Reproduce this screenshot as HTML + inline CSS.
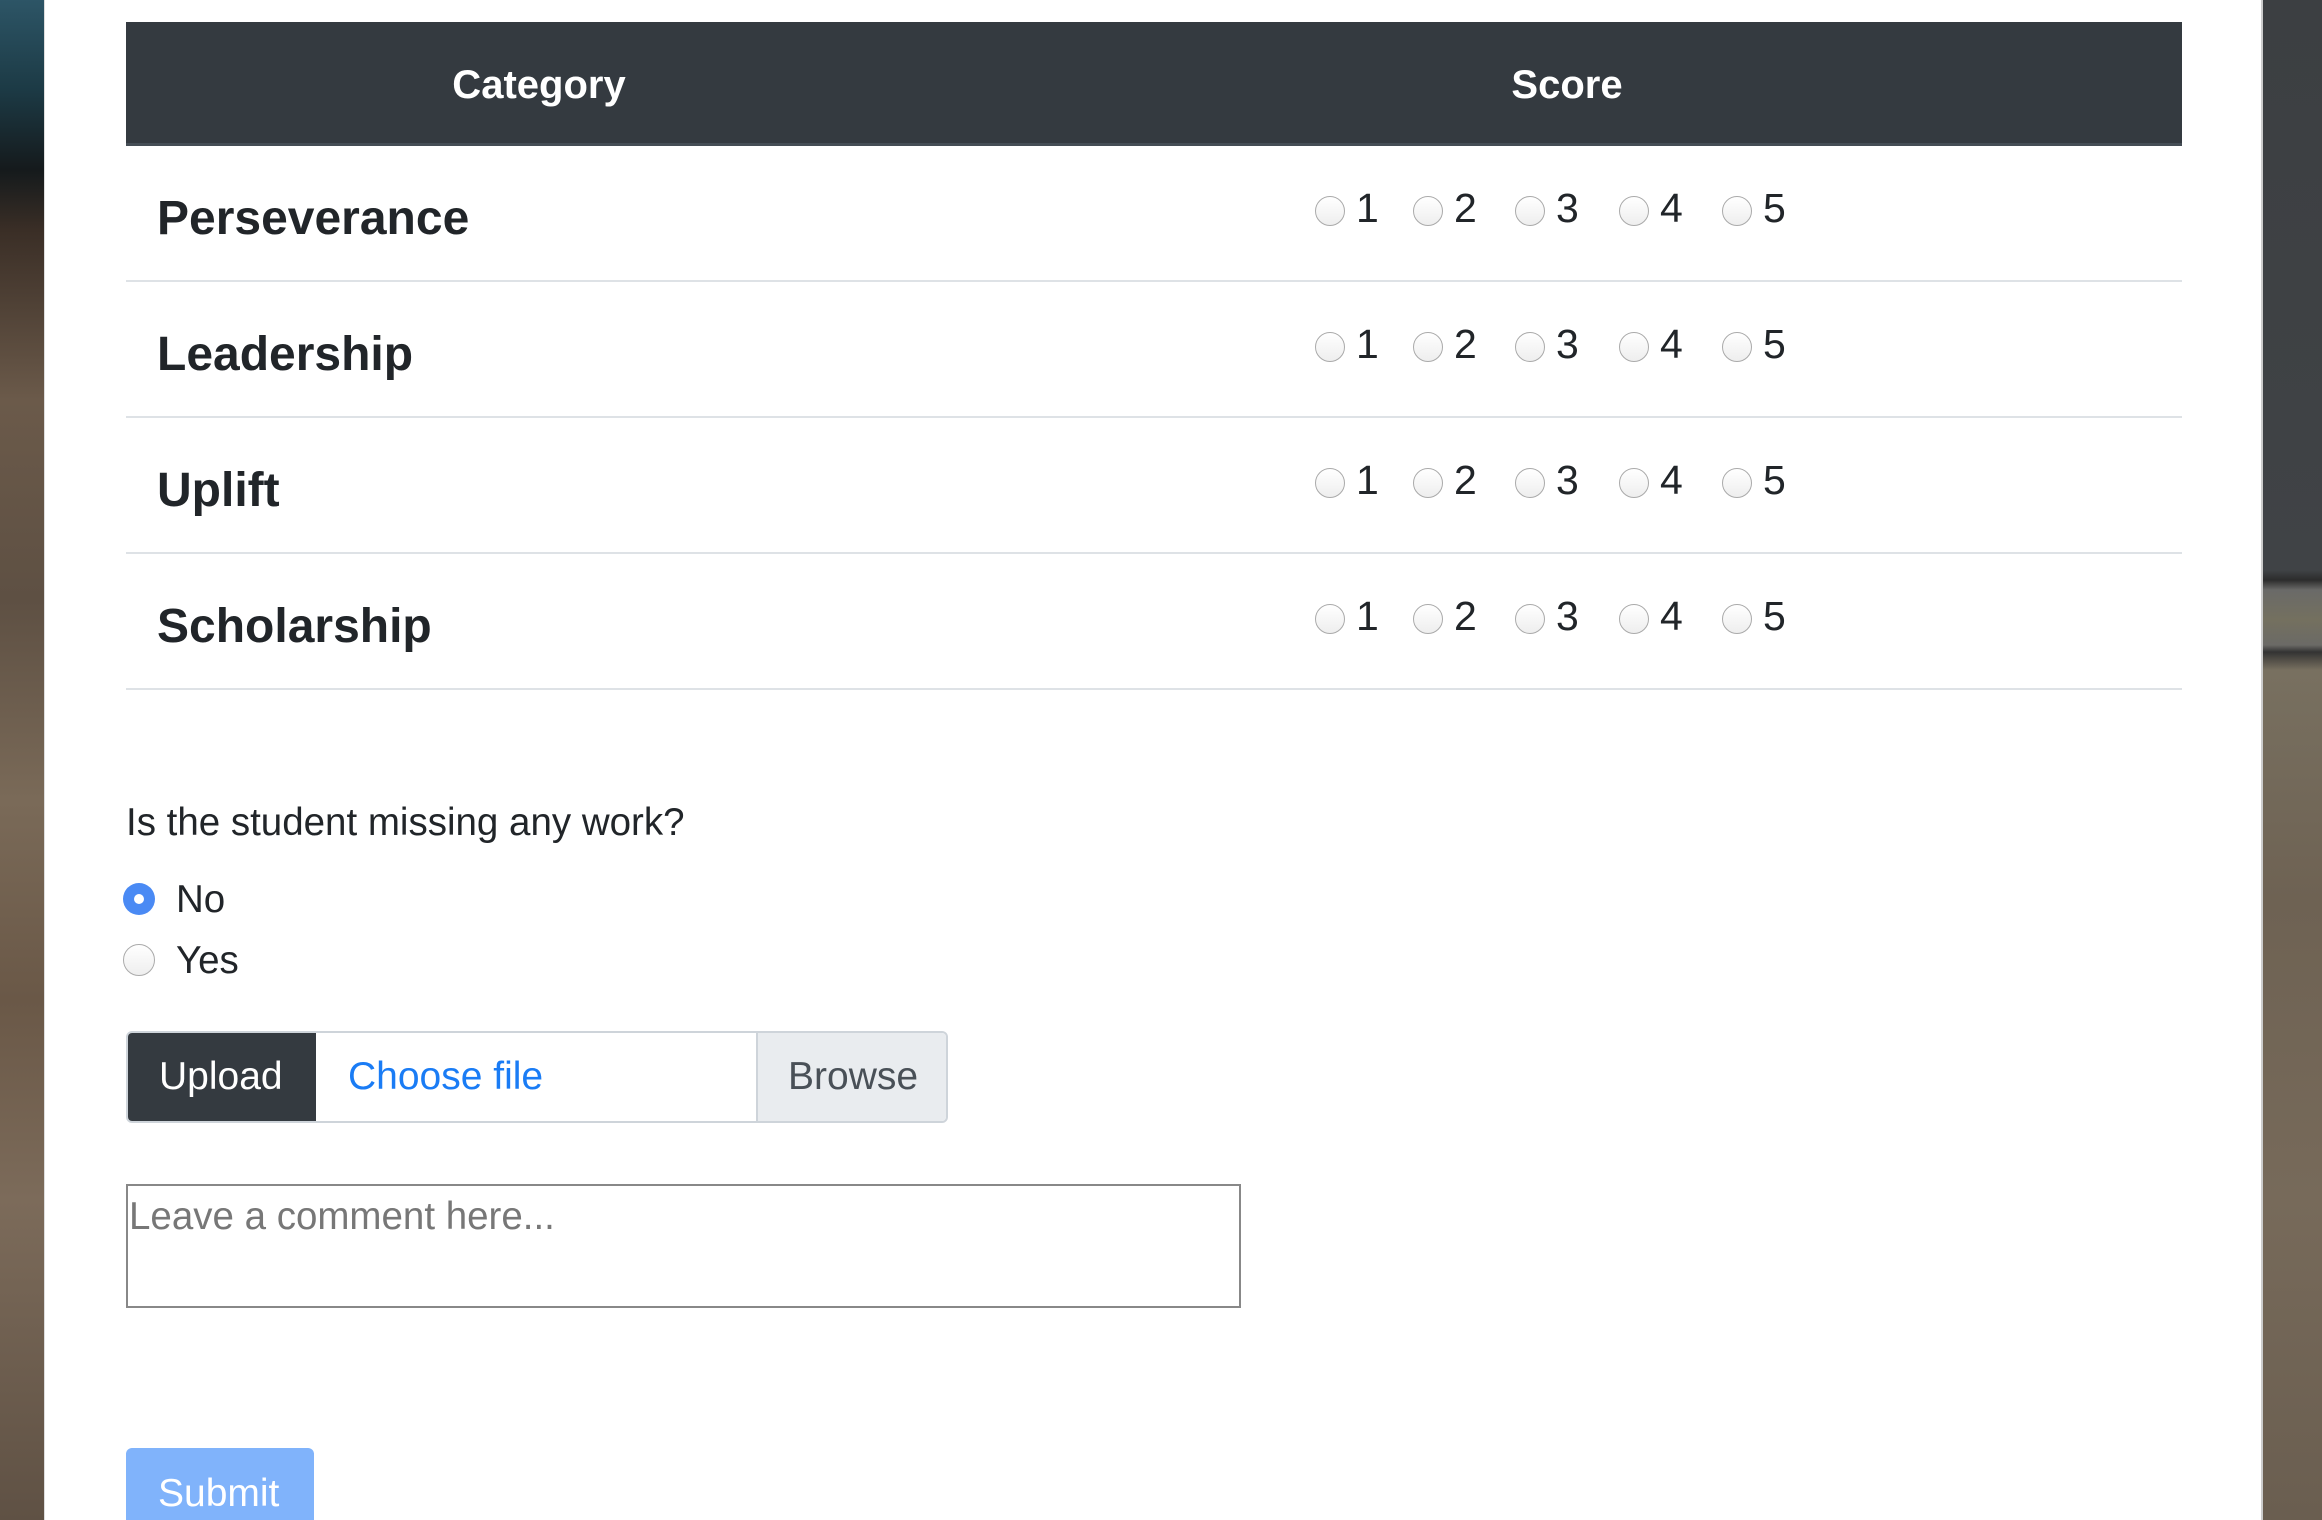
<!DOCTYPE html>
<html><head><meta charset="utf-8"><style>
*{margin:0;padding:0;box-sizing:border-box}
html,body{width:2322px;height:1520px;overflow:hidden}
body{position:relative;font-family:"Liberation Sans",sans-serif;color:#212529;background:#6a5e50}
.abs{position:absolute}
#lbg{left:0;top:0;width:44px;height:1520px;background:linear-gradient(180deg,#2d5566 0,#1c3a45 90px,#151a1c 170px,#3a2e26 230px,#6b5a4a 400px,#5e5043 600px,#7a6a58 800px,#6a5847 1000px,#7c6b5a 1200px,#5f5144 1520px)}
#rbg{left:2263px;top:0;width:59px;height:1520px;background:linear-gradient(180deg,#3c3f42 0,#404346 570px,#2c2c2c 580px,#6a6a68 590px,#74705f 620px,#6b6a66 645px,#333 652px,#787060 670px,#6e6253 900px,#776a5a 1200px,#6a5e50 1520px)}
#panel{left:44px;top:0;width:2219px;height:1520px;background:#fff;border-left:1px solid #ddd;border-right:2px solid #ccc}
#thead{left:126px;top:22px;width:2056px;height:124px;background:#343a40;border-bottom:3px solid #454d55;color:#fff;font-weight:bold;font-size:40px}
#thead span{position:absolute;top:41px;transform:translateX(-50%)}
.row{left:126px;width:2056px;height:136px;border-bottom:2px solid #dee2e6}
.lab{position:absolute;left:31px;top:45px;font-weight:bold;font-size:48px}
.r{position:absolute;width:30px;height:30px;border-radius:50%;border:1.5px solid #aaa;background:linear-gradient(#fff,#eee)}
.d{position:absolute;font-size:41px;top:39px}
.t{font-size:38.5px}
</style></head><body>
<div id="lbg" class="abs"></div><div id="rbg" class="abs"></div>
<div id="panel" class="abs"></div>
<div id="thead" class="abs"><span style="left:413px">Category</span><span style="left:1441px">Score</span></div>
<div class="row abs" style="top:146px"><div class="lab">Perseverance</div>
<div class="r" style="left:1189px;top:50px"></div><div class="d" style="left:1230px">1</div>
<div class="r" style="left:1287px;top:50px"></div><div class="d" style="left:1328px">2</div>
<div class="r" style="left:1389px;top:50px"></div><div class="d" style="left:1430px">3</div>
<div class="r" style="left:1493px;top:50px"></div><div class="d" style="left:1534px">4</div>
<div class="r" style="left:1596px;top:50px"></div><div class="d" style="left:1637px">5</div></div>
<div class="row abs" style="top:282px"><div class="lab">Leadership</div>
<div class="r" style="left:1189px;top:50px"></div><div class="d" style="left:1230px">1</div>
<div class="r" style="left:1287px;top:50px"></div><div class="d" style="left:1328px">2</div>
<div class="r" style="left:1389px;top:50px"></div><div class="d" style="left:1430px">3</div>
<div class="r" style="left:1493px;top:50px"></div><div class="d" style="left:1534px">4</div>
<div class="r" style="left:1596px;top:50px"></div><div class="d" style="left:1637px">5</div></div>
<div class="row abs" style="top:418px"><div class="lab">Uplift</div>
<div class="r" style="left:1189px;top:50px"></div><div class="d" style="left:1230px">1</div>
<div class="r" style="left:1287px;top:50px"></div><div class="d" style="left:1328px">2</div>
<div class="r" style="left:1389px;top:50px"></div><div class="d" style="left:1430px">3</div>
<div class="r" style="left:1493px;top:50px"></div><div class="d" style="left:1534px">4</div>
<div class="r" style="left:1596px;top:50px"></div><div class="d" style="left:1637px">5</div></div>
<div class="row abs" style="top:554px"><div class="lab">Scholarship</div>
<div class="r" style="left:1189px;top:50px"></div><div class="d" style="left:1230px">1</div>
<div class="r" style="left:1287px;top:50px"></div><div class="d" style="left:1328px">2</div>
<div class="r" style="left:1389px;top:50px"></div><div class="d" style="left:1430px">3</div>
<div class="r" style="left:1493px;top:50px"></div><div class="d" style="left:1534px">4</div>
<div class="r" style="left:1596px;top:50px"></div><div class="d" style="left:1637px">5</div></div>

<div class="abs t" style="left:126px;top:801px">Is the student missing any work?</div>
<div class="abs" style="left:123px;top:883px;width:32px;height:32px;border-radius:50%;background:#4a8af4;"><div style="position:absolute;left:11px;top:11px;width:10px;height:10px;border-radius:50%;background:#fff"></div></div>
<div class="abs t" style="left:176px;top:878px">No</div>
<div class="abs" style="left:123px;top:944px;width:32px;height:32px;border-radius:50%;border:1.5px solid #aaa;background:linear-gradient(#fff,#eee)"></div>
<div class="abs t" style="left:176px;top:939px">Yes</div>

<div class="abs" style="left:126px;top:1031px;width:822px;height:92px;border:2px solid #ced4da;border-radius:6px;overflow:hidden;font-size:39px">
<div style="position:absolute;left:0;top:0;width:188px;height:100%;background:#343a40;color:#fff;padding:22px 0 0 31px">Upload</div>
<div style="position:absolute;left:220px;top:22px;color:#1a7cf5">Choose file</div>
<div style="position:absolute;left:628px;top:0;right:0;height:100%;background:#e9ecef;border-left:2px solid #ced4da;color:#495057;padding:22px 0 0 30px">Browse</div>
</div>
<div class="abs" style="left:126px;top:1184px;width:1115px;height:124px;border:2px solid #888;font-size:38.5px;color:#777;padding:9px 0 0 1px">Leave a comment here...</div>
<div class="abs" style="left:126px;top:1448px;width:188px;height:72px;background:#80b3fb;border-radius:6px 6px 0 0;color:#fff;font-size:39px;padding:24px 0 0 32px">Submit</div>
</body></html>
